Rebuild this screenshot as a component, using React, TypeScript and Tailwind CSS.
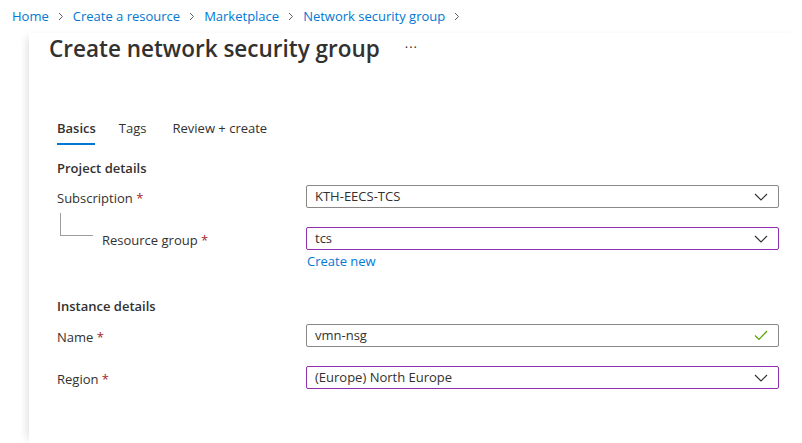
import React from 'react';

const font = { fontFamily: '"Open Sans", "Noto Sans", sans-serif' };

function Chevron() {
  return (
    <svg width="14" height="8" viewBox="0 0 14 8" className="text-[#323130]">
      <path d="M1 1l6 6 6-6" fill="none" stroke="currentColor" strokeWidth="1.1" />
    </svg>
  );
}

function Crumb({ label }: { label: string }) {
  return (
    <>
      <span className="text-[#0078d4]">{label}</span>
      <svg width="6" height="9" viewBox="0 0 6 9" className="mx-[9px] text-[#605e5c]">
        <path d="M1 1l3.5 3.5L1 8" fill="none" stroke="currentColor" strokeWidth="1" />
      </svg>
    </>
  );
}

function Label({ text }: { text: string }) {
  return (
    <span className="text-[13px] text-[#323130]">
      {text} <span className="text-[#a4262c]">*</span>
    </span>
  );
}

function Field({
  value,
  purple,
  check,
}: {
  value: string;
  purple?: boolean;
  check?: boolean;
}) {
  return (
    <div
      className={`flex h-[23px] w-[473px] items-center justify-between rounded-[2px] border pl-[8px] pr-[10px] text-[13px] text-[#323130] ${
        purple ? 'border-[#8f2fab]' : 'border-[#8a8886]'
      }`}
    >
      <span>{value}</span>
      {check ? (
        <svg width="14" height="11" viewBox="0 0 14 11">
          <path d="M1 5.5l4 4L13 1" fill="none" stroke="#57a300" strokeWidth="1.2" />
        </svg>
      ) : (
        <Chevron />
      )}
    </div>
  );
}

export default function App() {
  return (
    <div className="h-[443px] w-[802px] overflow-hidden bg-white" style={font}>
      <div className="flex h-[33px] items-center pl-[12px] text-[13px]">
        <Crumb label="Home" />
        <Crumb label="Create a resource" />
        <Crumb label="Marketplace" />
        <Crumb label="Network security group" />
      </div>
      <div className="ml-[29px] h-[410px] bg-white shadow-[-6px_0_8px_-4px_rgba(0,0,0,0.12)]">
        <div className="flex items-center pl-[20px] pt-[1px]">
          <h1 className="text-[22.5px] font-semibold leading-[30px] text-[#323130]">
            Create network security group
          </h1>
          <span className="ml-[25px] -mt-[2px] text-[13px] tracking-[1px] text-[#323130]">···</span>
        </div>

        <div className="ml-[28px] mt-[55px] flex gap-[23px] text-[13px] text-[#323130]">
          <div className="flex flex-col">
            <span className="font-semibold leading-[18px]">Basics</span>
            <div className="mt-[6px] h-[2px] w-[38px] bg-[#0078d4]" />
          </div>
          <span className="leading-[18px]">Tags</span>
          <span className="ml-[3px] leading-[18px]">Review + create</span>
        </div>

        <div className="ml-[28px] mt-[14px] text-[13px] font-semibold text-[#323130]">Project details</div>

        <div className="ml-[28px] mt-[6px] flex items-center">
          <div className="w-[249px]">
            <Label text="Subscription" />
          </div>
          <Field value="KTH-EECS-TCS" />
        </div>

        <div className="ml-[28px] mt-[18px] flex items-center">
          <div className="relative w-[249px] pl-[45px]">
            <div className="absolute left-[3px] top-[-14px] h-[23px] w-[33px] border-b border-l border-[#a19f9d]" />
            <Label text="Resource group" />
          </div>
          <Field value="tcs" purple />
        </div>
        <div className="ml-[278px] mt-[1px] text-[13px] text-[#0078d4]">Create new</div>

        <div className="ml-[28px] mt-[26px] text-[13px] font-semibold text-[#323130]">Instance details</div>

        <div className="ml-[28px] mt-[7px] flex items-center">
          <div className="w-[249px]">
            <Label text="Name" />
          </div>
          <Field value="vmn-nsg" check />
        </div>

        <div className="ml-[28px] mt-[18px] flex items-center">
          <div className="w-[249px]">
            <Label text="Region" />
          </div>
          <Field value="(Europe) North Europe" purple />
        </div>
      </div>
    </div>
  );
}
